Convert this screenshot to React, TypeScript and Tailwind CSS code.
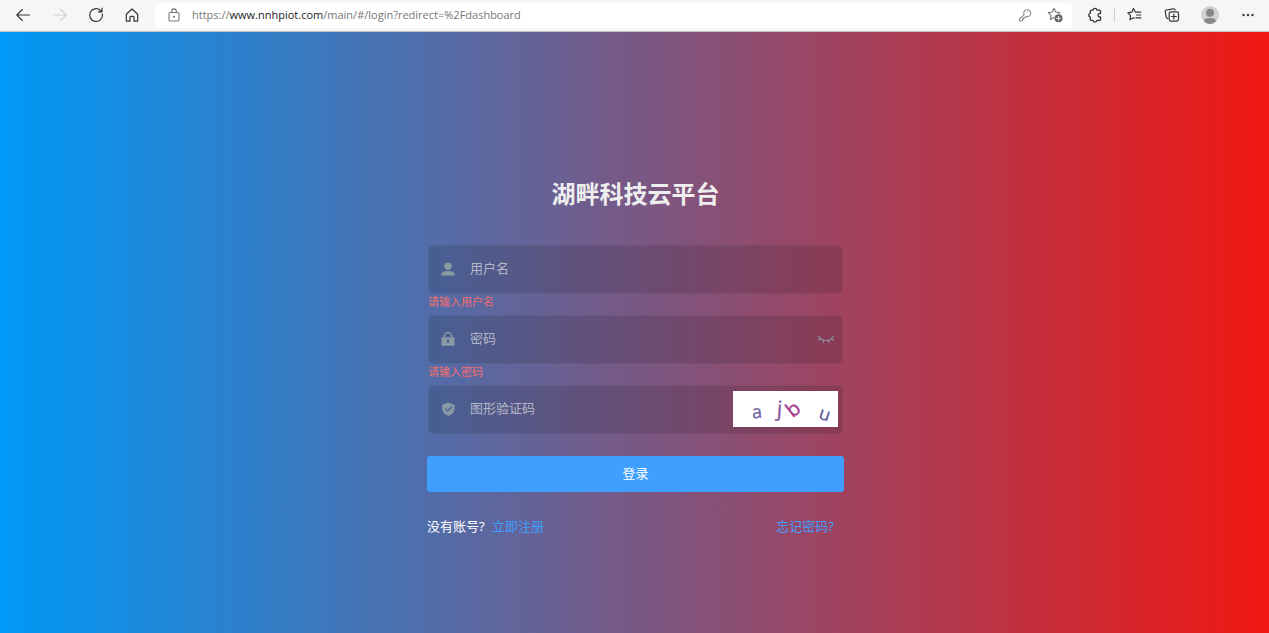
import type { ReactNode } from "react";

const stroke = {
  fill: "none",
  stroke: "currentColor",
  strokeWidth: 1.1,
  strokeLinecap: "round" as const,
  strokeLinejoin: "round" as const,
};

const STAR = "M7 1.3 L8.8 5 L12.8 5.6 L9.9 8.4 L10.6 12.4 L7 10.5 L3.4 12.4 L4.1 8.4 L1.2 5.6 L5.2 5 Z";

function BarButton({ label, className, children }: { label: string; className: string; children: ReactNode }) {
  return (
    <button type="button" aria-label={label} className={`flex h-7 shrink-0 items-center justify-center ${className}`}>
      {children}
    </button>
  );
}

function BrowserBar() {
  return (
    <header className="flex h-8 items-center border-b border-[#c4c4c4] bg-[#f6f6f6] pr-0.5 pb-px pl-1.5 text-[#333]">
      <nav className="flex">
        <BarButton label="后退" className="w-9">
          <svg className="size-4" viewBox="0 0 16 16" {...stroke}>
            <path d="M13.500 8H.8M6.300 2.500.8 8l5.500 5.500" />
          </svg>
        </BarButton>
        <BarButton label="前进" className="w-9 text-[#d0d0d0]">
          <svg className="size-4" viewBox="0 0 16 16" {...stroke}>
            <path d="M1.500 8h12.700M8.700 2.500 14.200 8l-5.500 5.500" />
          </svg>
        </BarButton>
        <BarButton label="刷新" className="w-9">
          <svg className="size-4" viewBox="0 0 16 16" {...stroke} strokeWidth={1.2}>
            <path d="M14.400 7.200A6.400 6.400 0 1 1 12.300 3.300L13.800 4.700M14 1.200v3.600h-3.600" />
          </svg>
        </BarButton>
        <BarButton label="主页" className="w-9">
          <svg className="size-4" viewBox="0 0 16 16" {...stroke} strokeWidth={1.2}>
            <path d="M2.3 7.2 8 2l5.7 5.2v6.3a.6.6 0 0 1-.6.6H10V10.300a.9.9 0 0 0-.9-.9H6.900a.9.9 0 0 0-.9.9v3.800H2.900a.6.6 0 0 1-.6-.6Z" />
          </svg>
        </BarButton>
      </nav>
      <div className="ml-[5px] flex h-[25px] flex-1 items-center rounded-sm bg-white pr-0.5 pl-3 text-[#777]">
        <svg className="size-3.5 shrink-0" viewBox="0 0 14 14" {...stroke}>
          <rect x="2" y="4.500" width="10" height="8.500" rx="1.200" />
          <path d="M4.700 4.300V3.200a2.300 2.300 0 0 1 4.600 0v1.100" />
          <circle cx="7" cy="8.700" r=".5" fill="currentColor" />
        </svg>
        <p className="ml-[11px] flex-1 font-['Open_Sans','Noto_Sans',sans-serif] text-[11px] leading-5 whitespace-nowrap text-[#777]">
          https://<span className="text-[#222]">www.nnhpiot.com</span>/main/#/login?redirect=%2Fdashboard
        </p>
        <BarButton label="密码" className="w-[30px] text-[#888]">
          <svg className="size-3.5" viewBox="0 0 14 14" {...stroke}>
            <path d="M6.100 6.700A3.500 3.500 0 1 1 8.100 8.500L6.900 9.700H5.700v1.200H4.500v1.200L3.600 13H1.500v-1.900Z" />
            <circle cx="10" cy="4" r=".6" fill="currentColor" stroke="none" />
          </svg>
        </BarButton>
        <BarButton label="添加到收藏夹" className="w-[30px]">
          <svg className="size-4" viewBox="0 0 16 16" {...stroke}>
            <path d={STAR} />
            <circle cx="11.500" cy="11.300" r="4.500" fill="white" stroke="none" />
            <circle cx="11.500" cy="11.300" r="4" fill="#666" stroke="none" />
            <path d="M11.500 9.500v3.600M9.700 11.300h3.600" stroke="white" strokeWidth={1} />
          </svg>
        </BarButton>
      </div>
      <div className="ml-1 flex items-center">
        <BarButton label="扩展" className="w-[38px]">
          <svg className="size-4" viewBox="0 0 16 16" {...stroke} strokeWidth={1.3}>
            <path d="M5.900 3.100a2.100 2.100 0 0 1 4.100 0h2.500a1 1 0 0 1 1 1v2.400a1.800 1.800 0 1 0 0 3.400V12.400a1 1 0 0 1-1 1H10a2.100 2.100 0 0 1-4.100 0H4.300a1 1 0 0 1-1-1v-2.300a2 2 0 0 1 0-3.900V4.100a1 1 0 0 1 1-1Z" />
          </svg>
        </BarButton>
        <span className="h-3.5 w-px bg-[#ccc]" />
        <BarButton label="收藏夹" className="w-[38px]">
          <svg className="size-4" viewBox="0 0 16 16" {...stroke} strokeWidth={1.2}>
            <path d="M9.400 5.200 7.500 1.500 5.700 5.200 1.800 5.800 4.600 8.600 3.900 12.700 7.500 10.800 8.300 11.200M9.400 5.200h5.400M10.600 8h4.200M9.900 10.800h4.900" />
          </svg>
        </BarButton>
        <BarButton label="集锦" className="w-[38px]">
          <svg className="size-4" viewBox="0 0 16 16" {...stroke} strokeWidth={1.2}>
            <rect x="5.200" y="4.800" width="9.300" height="9.300" rx="1.800" />
            <path d="M9.850 7v5M7.350 9.500h5M3.700 11.700 2.900 11a2 2 0 0 1-.7-1.100L1.300 5a1.700 1.700 0 0 1 1.400-2l6.600-1.200a1.700 1.700 0 0 1 1.900 1.200" />
          </svg>
        </BarButton>
        <BarButton label="个人资料" className="w-[38px]">
          <svg className="size-[18px]" viewBox="0 0 18 18">
            <circle cx="9" cy="9" r="9" fill="#d2d0ce" />
            <circle cx="9" cy="6.800" r="4" fill="#8a8886" />
            <path d="M3 15c0-2 2-3 6-3s6 1 6 3c-1.600 2-3.700 3-6 3s-4.400-1-6-3Z" fill="#8a8886" />
          </svg>
        </BarButton>
        <BarButton label="更多" className="w-[38px]">
          <svg className="size-4" viewBox="0 0 16 16" fill="currentColor">
            <circle cx="3.500" cy="8" r="1.200" />
            <circle cx="8" cy="8" r="1.200" />
            <circle cx="12.500" cy="8" r="1.200" />
          </svg>
        </BarButton>
      </div>
    </header>
  );
}

function Field({ id, label, type = "text", icon, error, children }: {
  id: string;
  label: string;
  type?: string;
  icon: ReactNode;
  error?: string;
  children?: ReactNode;
}) {
  return (
    <div className="px-px">
      <div className="flex h-[49px] items-center rounded-[5px] border border-white/4 bg-black/12 pr-1 pl-[11px]">
        <label htmlFor={id} aria-label={label} className="text-[#889aa4]">
          {icon}
        </label>
        <input
          id={id}
          type={type}
          placeholder={label}
          className="ml-3.5 h-10 min-w-0 flex-1 bg-transparent pb-0.5 text-[13px] text-white outline-none placeholder:text-[#b4b7c6]"
        />
        {children}
      </div>
      <p className="h-[21px] text-[11px] leading-4 text-[#f56c6c]">{error}</p>
    </div>
  );
}

const UserIcon = (
  <svg className="size-4" viewBox="0 0 16 16" fill="currentColor">
    <circle cx="8" cy="5.200" r="3.700" />
    <path d="M1.500 14.500v-1.300C1.500 10.900 4 9.900 8 9.900s6.500 1 6.500 3.300v1.300Z" />
  </svg>
);

const LockIcon = (
  <svg className="size-4" viewBox="0 0 16 16">
    <path d="M4.500 7V5a3.500 3.500 0 0 1 7 0v2" fill="none" stroke="currentColor" strokeWidth="1.500" />
    <path
      fillRule="evenodd"
      fill="currentColor"
      d="M2.700 6.300h10.600a1.300 1.300 0 0 1 1.300 1.300v5.800a1.300 1.300 0 0 1-1.300 1.300H2.700a1.300 1.300 0 0 1-1.300-1.300V7.600a1.300 1.300 0 0 1 1.300-1.300ZM8 8.500a1.300 1.300 0 0 0-.6 2.450V12.600h1.200v-1.650A1.300 1.300 0 0 0 8 8.500Z"
    />
  </svg>
);

const ShieldIcon = (
  <svg className="size-4" viewBox="0 0 16 16">
    <path
      fillRule="evenodd"
      fill="currentColor"
      d="M8.400 1.500 14.500 3.700V8c0 3.300-2.300 5.300-6.100 7C4.600 13.300 2.300 11.300 2.300 8V3.700ZM5.700 7.300l-.8.800 2.700 2.700 4.700-4.600-.8-.9-3.900 3.800Z"
    />
  </svg>
);

function Captcha() {
  return (
    <button type="button" aria-label="刷新验证码" className="h-9 w-[105px] shrink-0 bg-white">
      <svg className="h-9 w-[105px] font-['Open_Sans','Noto_Sans',sans-serif]" viewBox="0 0 105 36">
        <text x="19" y="27" fontSize="18" fill="#68659f" stroke="#68659f" strokeWidth=".3" transform="rotate(-6 24 22)">a</text>
        <text x="44" y="25" fontSize="21" fill="#8a55a0" stroke="#8a55a0" strokeWidth=".3" transform="rotate(4 46 18)">j</text>
        <text x="54" y="25" fontSize="20" fill="#a83c8d" stroke="#a83c8d" strokeWidth=".4" transform="rotate(-38 60 18)">b</text>
        <text x="86" y="29" fontSize="18" fill="#625ca0" stroke="#625ca0" strokeWidth=".3" transform="rotate(18 91 24)">u</text>
      </svg>
    </button>
  );
}

export default function App() {
  return (
    <div className="flex min-h-screen flex-col font-['Noto_Sans','Noto_Sans_CJK_SC',sans-serif]">
      <BrowserBar />
      <main className="flex flex-1 items-center justify-center bg-linear-to-r/srgb from-[#0099f7] to-[#f11712] pt-[46px] pl-0.5">
        <form className="w-full max-w-[417px]" onSubmit={(e) => e.preventDefault()}>
          <h1 className="mb-[33px] text-center text-2xl leading-9 font-bold text-[#eee]">湖畔科技云平台</h1>
          <Field id="username" label="用户名" icon={UserIcon} error="请输入用户名" />
          <Field id="password" label="密码" type="password" icon={LockIcon} error="请输入密码">
            <button type="button" aria-label="显示密码" className="mr-1 text-[#889aa4]">
              <svg className="size-4" viewBox="0 0 16 16" {...stroke} strokeWidth={1.200}>
                <path d="M.7 5.500C2.300 8 4.900 9.500 8 9.500s5.700-1.500 7.300-4M2.600 7.400 1 9M5.800 9.300l-.7 2M10.200 9.300l.7 2M13.400 7.400 15 9" />
              </svg>
            </button>
          </Field>
          <Field id="captcha" label="图形验证码" icon={ShieldIcon}>
            <Captcha />
          </Field>
          <button type="submit" className="mt-px h-9 w-full rounded-[3px] bg-[#409eff] text-[13px] text-white">
            登录
          </button>
          <div className="mt-6 flex justify-between pr-2.5 text-[13px] leading-5">
            <p className="text-white">
              没有账号? <a href="#register" className="ml-1 text-[#409eff]">立即注册</a>
            </p>
            <a href="#forgot" className="text-[#409eff]">忘记密码?</a>
          </div>
        </form>
      </main>
    </div>
  );
}
